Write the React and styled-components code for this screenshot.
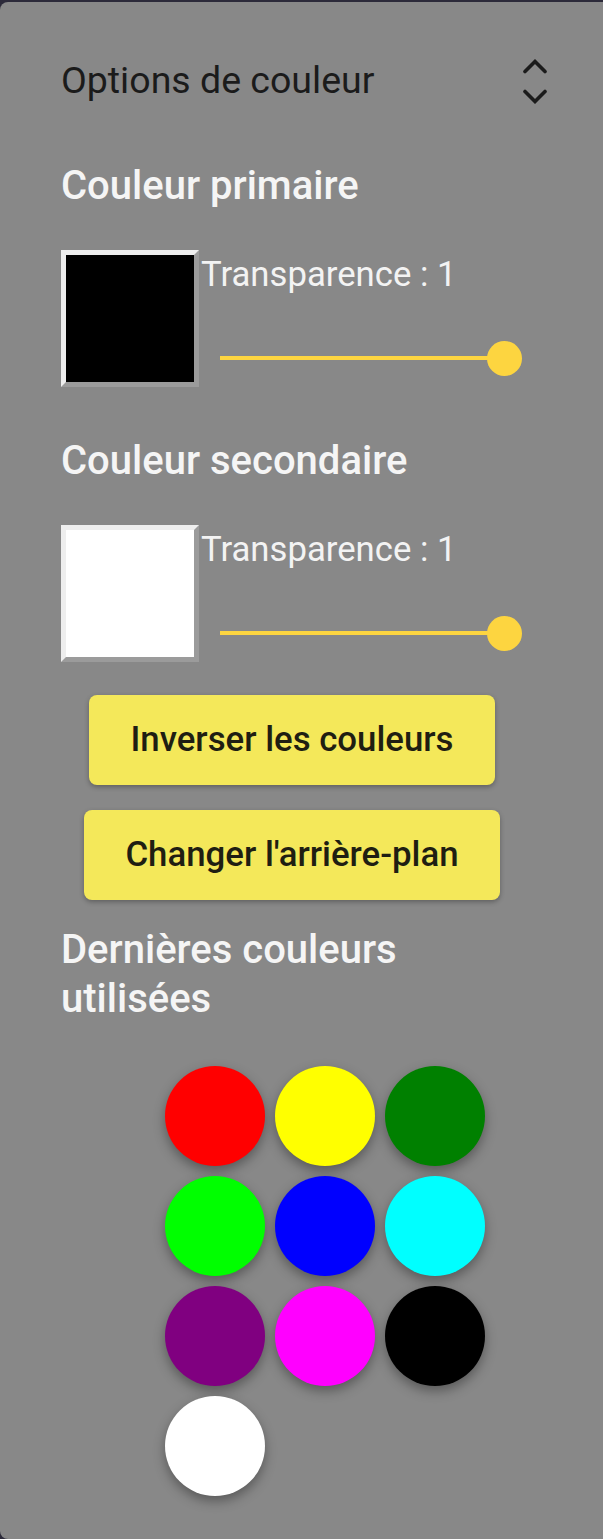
import React from 'react';
import styled, { createGlobalStyle } from 'styled-components';

const GlobalStyle = createGlobalStyle`
  html, body {
    margin: 0;
    padding: 0;
    background: #2c2a3a;
    font-family: Roboto, "Noto Sans", sans-serif;
  }
`

const Panel = styled.div`
  margin-top: 2px;
  min-height: 1537px;
  box-sizing: border-box;
  background: #888888;
  border-radius: 8px 0 0 8px;
  padding: 54px 80px 0 61px;
`

const Header = styled.div`
  display: flex;
  align-items: center;
  justify-content: space-between;
  height: 48px;
  margin-right: -24px;
  .title{
    font-size: 37.5px;
    color: #1b1b1b;
  }
`

const Heading = styled.h3`
  margin: ${p => p.top}px 0 0 0;
  font-size: 40px;
  line-height: 49px;
  font-weight: 500;
  color: #f5f5f5;
`

const ColorRow = styled.div`
  display: flex;
  align-items: flex-start;
  margin-top: 40px;
`

const Swatch = styled.div`
  width: 128px;
  height: 127px;
  flex: none;
  background: ${p => p.color};
  border-style: solid;
  border-width: 5px;
  border-color: #eeeeee #9b9b9b #9b9b9b #eeeeee;
`

const Controls = styled.div`
  flex: 1;
  padding: 4px 0 0 2px;
  .label{
    font-size: 34.7px;
    color: #f3f3f3;
  }
`

const Track = styled.div`
  position: relative;
  width: 285px;
  height: 4px;
  margin: 62px 0 0 19px;
  background: #fdd540;
  .thumb{
    position: absolute;
    right: -17px;
    top: 50%;
    width: 35px;
    height: 35px;
    margin-top: -17.5px;
    border-radius: 50%;
    background: #fdd540;
  }
`

const Actions = styled.div`
  display: flex;
  flex-direction: column;
  align-items: center;
  gap: 25px;
  margin-top: 33px;
`

const Button = styled.button`
  border: none;
  border-radius: 8px;
  background: #f4e85a;
  color: #1f1e12;
  font-family: Roboto, sans-serif;
  font-size: 34.8px;
  font-weight: 500;
  line-height: 41px;
  padding: 24px 41px 25px;
  box-shadow: 0 2px 5px rgba(0, 0, 0, 0.3);
  cursor: pointer;
`

const RecentGrid = styled.div`
  display: grid;
  grid-template-columns: repeat(3, 100px);
  gap: 10px;
  margin: 43px 0 0 104px;
`

const Dot = styled.div`
  width: 100px;
  height: 100px;
  border-radius: 50%;
  background: ${p => p.color};
  box-shadow: 0 5px 12px rgba(0, 0, 0, 0.35);
`

const recent = ['#ff0000', '#ffff00', '#008000', '#00ff00', '#0000ff', '#00ffff', '#800080', '#ff00ff', '#000000', '#ffffff'];

function Chevrons() {
  return (
    <svg width="24" height="48" viewBox="0 0 24 48" fill="none" stroke="#1b1b1b" strokeWidth="3.6" strokeLinecap="round">
      <polyline points="2,15.5 12,5.5 22,15.5" />
      <polyline points="2,35.5 12,45.5 22,35.5" />
    </svg>
  );
}

function ColorPicker({ title, top, color }) {
  return (
    <>
      <Heading top={top}>{title}</Heading>
      <ColorRow>
        <Swatch color={color} />
        <Controls>
          <div className="label">Transparence : 1</div>
          <Track><div className="thumb" /></Track>
        </Controls>
      </ColorRow>
    </>
  );
}

export default function App() {
  return (
    <Panel>
      <GlobalStyle />
      <Header>
        <span className="title">Options de couleur</span>
        <Chevrons />
      </Header>
      <ColorPicker title="Couleur primaire" top={57} color="#000000" />
      <ColorPicker title="Couleur secondaire" top={49} color="#ffffff" />
      <Actions>
        <Button>Inverser les couleurs</Button>
        <Button>Changer l'arrière-plan</Button>
      </Actions>
      <Heading top={25}>Dernières couleurs utilisées</Heading>
      <RecentGrid>
        {recent.map(c => <Dot key={c} color={c} />)}
      </RecentGrid>
    </Panel>
  );
}
